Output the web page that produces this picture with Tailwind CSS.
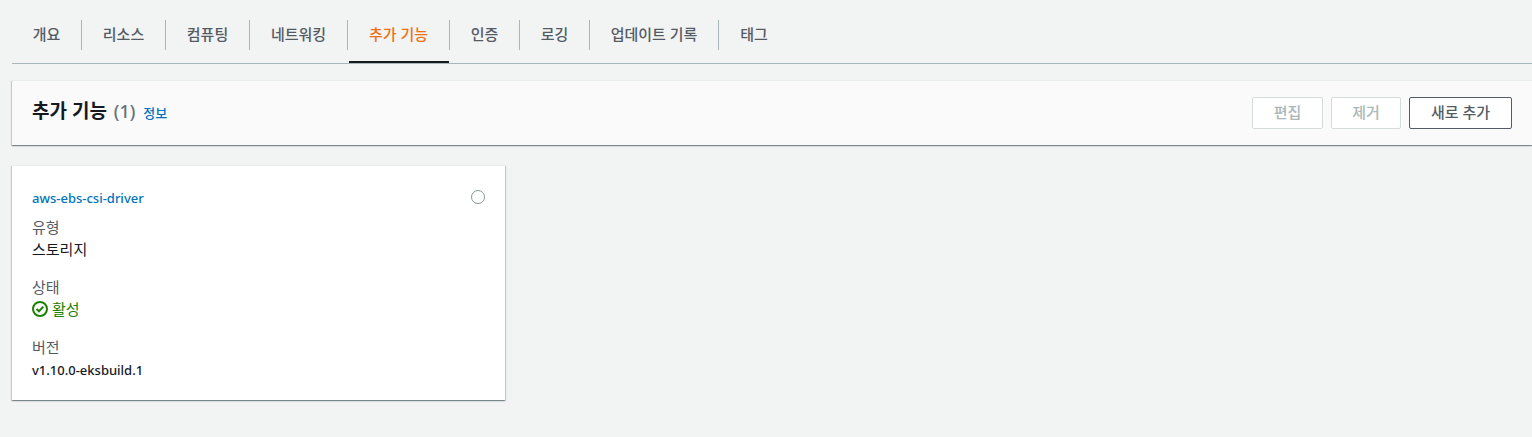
<!DOCTYPE html>
<html lang="ko">
<head>
    <meta charset="UTF-8">
    <meta name="viewport" content="width=device-width, initial-scale=1.0">
    <title>추가 기능</title>
    <script src="https://cdn.jsdelivr.net/npm/@tailwindcss/browser@4"></script>
</head>
<body class="min-h-screen bg-[#f2f3f3] pl-3 font-['Noto_Sans','Noto_Sans_CJK_KR',sans-serif] text-[15px] leading-[22px] text-[#16191f]">

<!-- Tabs -->
<nav class="flex h-16 border-b border-[#aab7b8] pt-5 font-medium text-[#545b64]">
    <a href="#overview" class="flex h-[30px] w-[70px] items-center justify-center border-r border-[#aab7b8] pb-0.5">개요</a>
    <a href="#resources" class="flex h-[30px] w-[84px] items-center justify-center border-r border-[#aab7b8] pb-0.5">리소스</a>
    <a href="#compute" class="flex h-[30px] w-[84px] items-center justify-center border-r border-[#aab7b8] pb-0.5">컴퓨팅</a>
    <a href="#networking" class="flex h-[30px] w-[98px] items-center justify-center border-r border-[#aab7b8] pb-0.5">네트워킹</a>
    <a href="#addons" aria-current="page" class="relative flex h-[30px] w-[102px] items-center justify-center border-r border-[#aab7b8] pb-0.5 text-[#ec7211] after:absolute after:right-0 after:left-px after:-bottom-[13px] after:h-0.5 after:bg-[#16191f]">추가 기능</a>
    <a href="#auth" class="flex h-[30px] w-[70px] items-center justify-center border-r border-[#aab7b8] pb-0.5">인증</a>
    <a href="#logging" class="flex h-[30px] w-[70px] items-center justify-center border-r border-[#aab7b8] pb-0.5">로깅</a>
    <a href="#updates" class="flex h-[30px] w-[129px] items-center justify-center border-r border-[#aab7b8] pb-0.5">업데이트 기록</a>
    <a href="#tags" class="flex h-[30px] w-[70px] items-center justify-center pb-0.5">태그</a>
</nav>

<main>
    <!-- Header -->
    <div class="mt-4 flex items-start justify-between border-t border-[#eaeded] bg-[#fafafa] px-5 py-4 shadow-[0_1px_1px_0_rgba(0,28,36,0.3),1px_1px_1px_0_rgba(0,28,36,0.15),-1px_1px_1px_0_rgba(0,28,36,0.15)]">
        <div class="flex items-baseline">
            <h2 class="text-[19px] leading-7 font-bold">추가 기능 <span class="ml-0.5 text-[18px] font-medium text-[#687078]">(1)</span></h2>
            <a href="#info" class="ml-2 text-[13px] font-medium text-[#0073bb]">정보</a>
        </div>
        <div class="flex gap-2 font-medium">
            <button type="button" disabled class="h-8 rounded-xs border border-[#d5dbdb] bg-white px-[21px] pb-0.5 text-[#aab7b8]">편집</button>
            <button type="button" disabled class="h-8 rounded-xs border border-[#d5dbdb] bg-white px-5 pb-0.5 text-[#aab7b8]">제거</button>
            <button type="button" class="h-8 rounded-xs border border-[#545b64] bg-white px-[21px] pb-0.5 text-[#545b64]">새로 추가</button>
        </div>
    </div>

    <!-- Cards -->
    <div class="mt-5 grid grid-cols-3 gap-5">
        <article class="border-t border-[#eaeded] bg-white px-5 py-5 shadow-[0_1px_1px_0_rgba(0,28,36,0.3),1px_1px_1px_0_rgba(0,28,36,0.15),-1px_1px_1px_0_rgba(0,28,36,0.15)]">
            <div class="flex items-center justify-between">
                <a href="#aws-ebs-csi-driver" class="pt-0.5 text-[13px] leading-5 font-medium text-[#0073bb]">aws-ebs-csi-driver</a>
                <input type="radio" name="addon" aria-label="aws-ebs-csi-driver" class="size-3.5 appearance-none rounded-full border border-[#879596] bg-white checked:border-4 checked:border-[#0073bb]">
            </div>
            <dl class="mt-2">
                <dt class="text-[#545b64]">유형</dt>
                <dd>스토리지</dd>
                <dt class="mt-4 text-[#545b64]">상태</dt>
                <dd class="flex items-center gap-1 text-[#1d8102]">
                    <svg class="size-4" viewBox="0 0 16 16" fill="none" stroke="currentColor" stroke-width="2">
                        <circle cx="8" cy="8" r="7"/>
                        <path d="M4.5 8 7 10.3 11.3 5.6"/>
                    </svg>
                    활성
                </dd>
                <dt class="mt-4 text-[#545b64]">버전</dt>
                <dd class="pt-0.5 text-[13px] leading-5 font-medium">v1.10.0-eksbuild.1</dd>
            </dl>
        </article>
    </div>
</main>

</body>
</html>
